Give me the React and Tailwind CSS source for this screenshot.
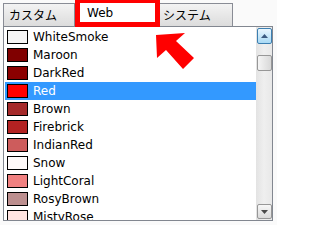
import React from 'react'

const colors = [
  { name: 'WhiteSmoke', hex: '#f5f5f5' },
  { name: 'Maroon', hex: '#800000' },
  { name: 'DarkRed', hex: '#8b0000' },
  { name: 'Red', hex: '#ff0000' },
  { name: 'Brown', hex: '#a52a2a' },
  { name: 'Firebrick', hex: '#b22222' },
  { name: 'IndianRed', hex: '#cd5c5c' },
  { name: 'Snow', hex: '#fffafa' },
  { name: 'LightCoral', hex: '#f08080' },
  { name: 'RosyBrown', hex: '#bc8f8f' },
  { name: 'MistyRose', hex: '#ffe4e1' },
]

const jp = { fontFamily: '"Noto Sans CJK JP", sans-serif' }
const latin = { fontFamily: '"DejaVu Sans", sans-serif' }

const ColorRow = ({ color, selected }) => (
  <div
    className={`flex items-center h-[18px] pl-[2px] ${selected ? 'bg-[#3399ff] text-white' : 'text-black'}`}
  >
    <span
      className="w-[21px] h-[14px] border border-black shrink-0"
      style={{ backgroundColor: color.hex }}
    />
    <span className="ml-[5px] text-[12px] leading-none" style={latin}>
      {color.name}
    </span>
  </div>
)

const App = () => {
  return (
    <div className="relative w-[277px] h-[225px] bg-[#fafafa] overflow-hidden">
      {/* Tabs */}
      <div className="flex items-start h-[26px] pl-[3px]">
        <div
          className="mt-[3px] w-[72px] h-[23px] border border-b-0 border-[#898c95] bg-gradient-to-b from-[#f3f3f3] to-[#dcdcdc] flex items-center pl-[5px] text-[12px] text-black"
          style={jp}
        >
          カスタム
        </div>
        <div
          className="relative z-10 w-[85px] h-[27px] border-[5px] border-t-[3px] border-[#ff0000] bg-white flex items-center pl-[7px] text-[12px] text-black"
          style={latin}
        >
          Web
        </div>
        <div
          className="mt-[3px] w-[73px] h-[23px] border border-b-0 border-l-0 border-[#898c95] bg-gradient-to-b from-[#f3f3f3] to-[#dcdcdc] flex items-center pl-[3px] text-[12px] text-black"
          style={jp}
        >
          システム
        </div>
      </div>

      {/* List box */}
      <div className="ml-[3px] w-[270px] h-[195px] border border-[#828790] bg-white flex">
        <div className="flex-1 pt-[1px] pl-[1px] overflow-hidden">
          {colors.map((c) => (
            <ColorRow key={c.name} color={c} selected={c.name === 'Red'} />
          ))}
        </div>

        {/* Scrollbar */}
        <div className="w-[16px] bg-gradient-to-r from-[#e3e3e3] via-[#efefef] to-[#e8e8e8] flex flex-col items-center pt-[1px] pb-[1px]">
          <div className="w-[15px] h-[16px] rounded-[2px] border border-[#3c7fb1] bg-gradient-to-b from-[#eaf6fd] to-[#a9daf5] flex items-center justify-center">
            <svg width="7" height="4" viewBox="0 0 7 4">
              <polygon points="0,4 7,4 3.5,0" fill="#3c5a80" />
            </svg>
          </div>
          <div className="mt-[11px] w-[15px] h-[16px] rounded-[2px] border border-[#979797] bg-gradient-to-r from-[#f5f5f5] to-[#d8d8d8]" />
          <div className="flex-1" />
          <div className="w-[15px] h-[15px] rounded-[2px] border border-[#979797] bg-gradient-to-b from-[#f7f7f7] to-[#dadada] flex items-center justify-center">
            <svg width="7" height="4" viewBox="0 0 7 4">
              <polygon points="0,0 7,0 3.5,4" fill="#4a4a4a" />
            </svg>
          </div>
        </div>
      </div>

      {/* Annotation arrow */}
      <svg
        className="absolute left-[150px] top-[28px]"
        width="50"
        height="45"
        viewBox="150 28 50 45"
      >
        <polygon
          points="156,35 157,58 166,50 183,69 194,58 176,41 185,33"
          fill="#ff0000"
        />
      </svg>
    </div>
  )
}

export default App
